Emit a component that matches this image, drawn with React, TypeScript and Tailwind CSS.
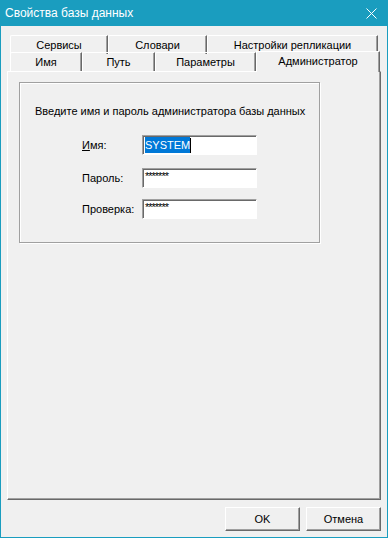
import React from 'react';

const font = { fontFamily: '"Liberation Sans", Arial, sans-serif' };

function BackTab({ label, width }: { label: string; width: string }) {
  return (
    <div
      className={`${width} h-[19px] flex items-center justify-center border-t border-l border-white border-r border-r-[#696969] shadow-[inset_-1px_0_0_#a0a0a0] rounded-tl-[2px] text-[11px] text-black leading-none`}
    >
      {label}
    </div>
  );
}

function Field({ label, children }: { label: React.ReactNode; children: React.ReactNode }) {
  return (
    <div className="flex items-center h-[20px]">
      <div className="w-[60px] text-[11px] leading-none text-black">{label}</div>
      <div className="w-[115px] h-[20px] bg-white border-t border-l border-[#a0a0a0] border-b border-r border-b-white border-r-white shadow-[inset_1px_1px_0_#696969] flex items-center pl-[2px] text-[11px] leading-none">
        {children}
      </div>
    </div>
  );
}

export default function App() {
  return (
    <div className="w-[388px] h-[538px] bg-[#1a9dbf] flex flex-col px-px pb-px select-none" style={font}>
      {/* title bar */}
      <div className="h-[26px] flex items-center justify-between pl-[4px] pr-[8px]">
        <span className="text-white text-[12px] leading-none">
          Свойства базы данных
        </span>
        <svg width="11" height="11" viewBox="0 0 11 11" className="mr-[2px]">
          <path d="M0.5 0.5 L10.5 10.5 M10.5 0.5 L0.5 10.5" stroke="#fff" strokeWidth="1" />
        </svg>
      </div>

      {/* client area */}
      <div className="flex-1 bg-[#f0f0f0] flex flex-col pt-[9px]">
        {/* back row of tabs */}
        <div className="flex ml-[9px]">
          <BackTab label="Сервисы" width="w-[98px]" />
          <BackTab label="Словари" width="w-[99px]" />
          <BackTab label="Настройки репликации" width="w-[171px]" />
        </div>
        {/* front row of tabs */}
        <div className="flex ml-[9px] h-[18px] items-end -mt-px">
          <BackTab label="Имя" width="w-[72px]" />
          <BackTab label="Путь" width="w-[73px]" />
          <BackTab label="Параметры" width="w-[101px]" />
          <div className="relative z-10 w-[124px] h-[21px] -mb-px bg-[#f0f0f0] flex items-start justify-center pt-[4px] border-t border-l border-white border-r border-r-[#696969] shadow-[inset_-1px_0_0_#a0a0a0] text-[11px] leading-none text-black">
            Администратор
          </div>
        </div>

        {/* tab page */}
        <div className="ml-[6px] w-[374px] h-[429px] border-t border-l border-white border-b border-r border-b-[#696969] border-r-[#696969] shadow-[inset_-1px_-1px_0_#a0a0a0] pl-[11px] pt-[10px]">
          <div className="w-[301px] h-[161px] border border-[#a0a0a0] shadow-[inset_1px_1px_0_#fff,1px_1px_0_#fff] flex flex-col">
            <div className="pl-[15px] pt-[22px] text-[11px] leading-[13px] text-black">
              Введите имя и пароль администратора базы данных
            </div>
            <div className="flex flex-col pl-[62px] mt-[17px]">
              <Field label={<><span className="underline">И</span>мя:</>}>
                <span className="bg-[#0078d7] text-white h-[16px] flex items-center">SYSTEM</span>
                <span className="w-px h-[15px] bg-black" />
              </Field>
              <div className="mt-[13px]">
                <Field label="Пароль:">
                  <span className="text-[11px] -mt-[4px] tracking-[-1px]">*******</span>
                </Field>
              </div>
              <div className="mt-[11px]">
                <Field label="Проверка:">
                  <span className="text-[11px] -mt-[4px] tracking-[-1px]">*******</span>
                </Field>
              </div>
            </div>
          </div>
        </div>

        {/* dialog buttons */}
        <div className="flex justify-end gap-[6px] pr-[6px] mt-[7px]">
          {['OK', 'Отмена'].map((b) => (
            <button
              key={b}
              className="w-[75px] h-[24px] bg-[#f0f0f0] border-t border-l border-white border-b border-r border-b-[#696969] border-r-[#696969] shadow-[inset_-1px_-1px_0_#a0a0a0] text-[11px] leading-none text-black"
            >
              {b}
            </button>
          ))}
        </div>
      </div>
    </div>
  );
}
